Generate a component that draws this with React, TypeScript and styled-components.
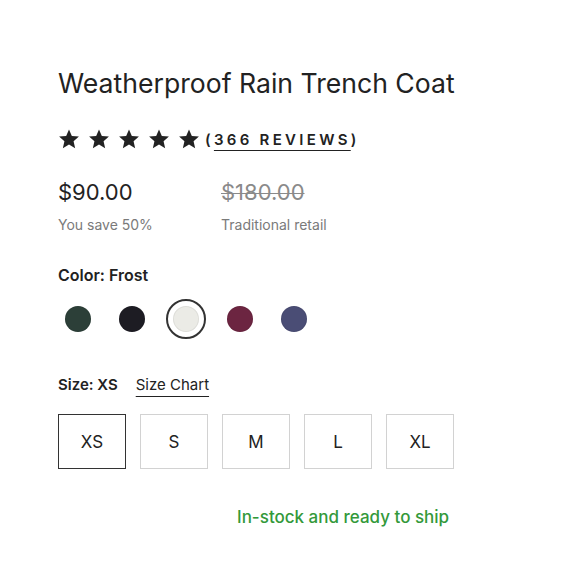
import React from "react";
import styled, { createGlobalStyle } from "styled-components";

const Global = createGlobalStyle`
  html, body { margin: 0; padding: 0; background: #fff; }
  body { font-family: Inter, "Noto Sans", sans-serif; color: #222; }
`;

const Page = styled.div`
  width: 580px;
  height: 580px;
  box-sizing: border-box;
  padding: 66px 0 0 58px;
  display: flex;
  flex-direction: column;
`;

const Title = styled.h1`
  margin: 0;
  font-size: 26.6px;
  font-weight: 400;
  line-height: 34px;
  color: #222;
`;

const RatingRow = styled.div`
  display: flex;
  align-items: center;
  margin-top: 26px;
  height: 26px;
`;

const Stars = styled.div`
  display: flex;
  gap: 8px;
`;

const Reviews = styled.span`
  margin-left: 5px;
  font-size: 15px;
  font-weight: 600;
  letter-spacing: 3.3px;
  color: #222;
`;

const Underlined = styled.span`
  text-decoration: underline;
  text-underline-offset: 5px;
  text-decoration-thickness: 1px;
`;

const PriceRow = styled.div`
  display: flex;
  margin-top: 26px;
`;

const PriceCol = styled.div<{ $w: number }>`
  width: ${(p) => p.$w}px;
  display: flex;
  flex-direction: column;
`;

const Price = styled.span<{ $old?: boolean }>`
  font-size: 22px;
  line-height: 28px;
  color: ${(p) => (p.$old ? "#8a8a8a" : "#222")};
  text-decoration: ${(p) => (p.$old ? "line-through" : "none")};
  text-decoration-thickness: 1px;
`;

const Sub = styled.span`
  margin-top: 10px;
  font-size: 14px;
  color: #7a7a7a;
`;

const Label = styled.div`
  font-size: 15px;
  font-weight: 600;
  color: #222;
  display: flex;
  align-items: center;
  gap: 18px;
`;

const ColorLabel = styled(Label)`
  margin-top: 32px;
  font-size: 16px;
`;

const Swatches = styled.div`
  display: flex;
  align-items: center;
  gap: 14px;
  margin-top: 14px;
`;

const SwatchRing = styled.div<{ $selected?: boolean }>`
  width: 40px;
  height: 40px;
  box-sizing: border-box;
  border-radius: 50%;
  border: 2px solid ${(p) => (p.$selected ? "#333" : "transparent")};
  display: flex;
  align-items: center;
  justify-content: center;
`;

const Swatch = styled.div<{ $c: string }>`
  width: 26px;
  height: 26px;
  border-radius: 50%;
  background: ${(p) => p.$c};
  box-shadow: inset 0 0 0 1px rgba(0, 0, 0, 0.06);
`;

const SizeLabel = styled(Label)`
  margin-top: 36px;
`;

const SizeChart = styled.span`
  font-weight: 400;
  text-decoration: underline;
  text-underline-offset: 6px;
  text-decoration-thickness: 1px;
`;

const Sizes = styled.div`
  display: flex;
  gap: 14px;
  margin-top: 20px;
`;

const SizeBox = styled.div<{ $selected?: boolean }>`
  width: 68px;
  height: 55px;
  box-sizing: border-box;
  border: ${(p) => (p.$selected ? "1.5px solid #333" : "1px solid #d2d2d2")};
  display: flex;
  align-items: center;
  justify-content: center;
  font-size: 17px;
  color: #222;
`;

const Stock = styled.div`
  margin-top: 38px;
  margin-left: 179px;
  font-size: 17px;
  font-weight: 500;
  color: #33993a;
`;

const Star = () => (
  <svg width="22" height="22" viewBox="0 0 24 24">
    <path
      d="M12 1.5l3.1 7.1 7.7.7-5.8 5.1 1.7 7.6L12 18l-6.7 4 1.7-7.6-5.8-5.1 7.7-.7z"
      fill="#222"
    />
  </svg>
);

const colors = ["#2c3f38", "#1d1c23", "#ebebe6", "#6c2541", "#4a4d75"];
const sizes = ["XS", "S", "M", "L", "XL"];

export default function App() {
  return (
    <Page>
      <Global />
      <Title>Weatherproof Rain Trench Coat</Title>
      <RatingRow>
        <Stars>
          {[0, 1, 2, 3, 4].map((i) => (
            <Star key={i} />
          ))}
        </Stars>
        <Reviews>
          (<Underlined>366 REVIEWS</Underlined>)
        </Reviews>
      </RatingRow>
      <PriceRow>
        <PriceCol $w={163}>
          <Price>$90.00</Price>
          <Sub>You save 50%</Sub>
        </PriceCol>
        <PriceCol $w={160}>
          <Price $old>$180.00</Price>
          <Sub>Traditional retail</Sub>
        </PriceCol>
      </PriceRow>
      <ColorLabel>Color: Frost</ColorLabel>
      <Swatches>
        {colors.map((c, i) => (
          <SwatchRing key={c} $selected={i === 2}>
            <Swatch $c={c} />
          </SwatchRing>
        ))}
      </Swatches>
      <SizeLabel>
        <span>Size: XS</span>
        <SizeChart>Size Chart</SizeChart>
      </SizeLabel>
      <Sizes>
        {sizes.map((s, i) => (
          <SizeBox key={s} $selected={i === 0}>
            {s}
          </SizeBox>
        ))}
      </Sizes>
      <Stock>In-stock and ready to ship</Stock>
    </Page>
  );
}
